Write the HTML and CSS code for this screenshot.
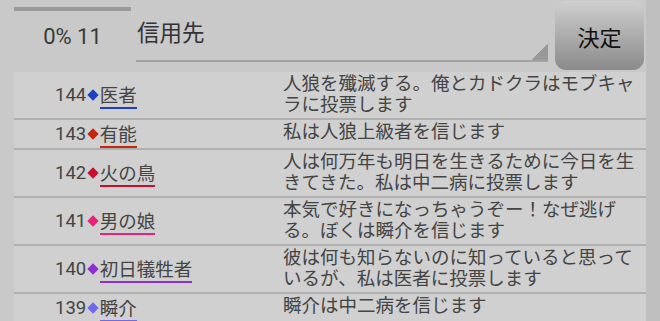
FILE: index.html
```html
<!DOCTYPE html>
<html lang="ja">
<head>
    <meta charset="UTF-8">
    <title>投票</title>
    <link rel="stylesheet" href="styles.css">
</head>
<body>
    <div class="top">
        <div class="progress">
            <div class="bar"></div>
            <div class="count">0% 11</div>
        </div>
        <div class="target">
            <span class="label">信用先</span>
            <span class="corner"></span>
        </div>
        <button class="decide">決定</button>
    </div>

    <div class="log">
        <div class="row first">
            <div class="who"><span class="num">144</span><span class="mark c144"></span><span class="name c144">医者</span></div>
            <div class="msg">人狼を殲滅する。俺とカドクラはモブキャラに投票します</div>
        </div>
        <div class="row">
            <div class="who"><span class="num">143</span><span class="mark c143"></span><span class="name c143">有能</span></div>
            <div class="msg">私は人狼上級者を信じます</div>
        </div>
        <div class="row">
            <div class="who"><span class="num">142</span><span class="mark c142"></span><span class="name c142">火の鳥</span></div>
            <div class="msg">人は何万年も明日を生きるために今日を生きてきた。私は中二病に投票します</div>
        </div>
        <div class="row">
            <div class="who"><span class="num">141</span><span class="mark c141"></span><span class="name c141">男の娘</span></div>
            <div class="msg">本気で好きになっちゃうぞー！なぜ逃げる。ぼくは瞬介を信じます</div>
        </div>
        <div class="row">
            <div class="who"><span class="num">140</span><span class="mark c140"></span><span class="name c140">初日犠牲者</span></div>
            <div class="msg">彼は何も知らないのに知っていると思っているが、私は医者に投票します</div>
        </div>
        <div class="row">
            <div class="who"><span class="num">139</span><span class="mark c139"></span><span class="name c139">瞬介</span></div>
            <div class="msg">瞬介は中二病を信じます</div>
        </div>
    </div>
</body>
</html>
```

FILE: styles.css
```css
html, body {
    height: 321px;
    overflow: hidden;
}
body {
    margin: 0;
    padding: 0 14px;
    background: linear-gradient(to right, #c9c9c9 calc(100% - 14px), #bfbfbf calc(100% - 14px));
    font-family: Roboto, "Noto Sans CJK JP", sans-serif;
    color: #444;
}
.top {
    display: flex;
    height: 73px;
}
.progress {
    width: 117px;
    padding-top: 7px;
}
.bar {
    height: 4px;
    background-color: #9a9a9a;
}
.count {
    text-align: center;
    font-size: 22px;
    line-height: 26px;
    margin-top: 13px;
    color: #3a3a3a;
}
.target {
    position: relative;
    margin-left: 5px;
    width: 412px;
    height: 60px;
    border-bottom: 2px solid #a3a3a3;
}
.label {
    display: block;
    padding-left: 1px;
    margin-top: 18px;
    font-size: 22.5px;
    line-height: 30px;
    color: #333;
}
.corner {
    position: absolute;
    right: 0;
    bottom: 0;
    width: 16px;
    height: 16px;
    background: linear-gradient(to bottom right, transparent 50%, #999 50%);
}
.decide {
    margin: 1px 0 0 7px;
    width: 89px;
    height: 69px;
    border: none;
    border-radius: 11px;
    background: linear-gradient(#cfcfcf, #8a8a8a);
    font-family: "Noto Sans CJK JP", sans-serif;
    font-size: 22px;
    color: #111;
    padding: 0;
}
.log {
    background-color: #d0d0d0;
}
.row {
    display: flex;
    border-bottom: 2px solid #b0b0b0;
}
.row.first {
    margin-top: -1px;
}
.who {
    width: 228px;
    padding-left: 41px;
    display: flex;
    align-items: center;
    font-size: 18.5px;
    line-height: 21px;
}
.num {
    color: #444;
}
.mark {
    width: 8px;
    height: 8px;
    margin: 0 2.5px 0 3px;
    transform: rotate(45deg);
}
.name {
    border-bottom: 2px solid;
    line-height: 22px;
    margin-top: 4px;
    color: #444;
}
.msg {
    flex: 1;
    font-size: 18.5px;
    line-height: 21px;
    padding: 2px 0;
}
.mark.c144 { background-color: #1e3fc0; }
.name.c144 { border-color: #1e3fc0; }
.mark.c143 { background-color: #c4280c; }
.name.c143 { border-color: #c4280c; }
.mark.c142 { background-color: #c8102e; }
.name.c142 { border-color: #c8102e; }
.mark.c141 { background-color: #e8247a; }
.name.c141 { border-color: #e8247a; }
.mark.c140 { background-color: #8e2fd6; }
.name.c140 { border-color: #8e2fd6; }
.mark.c139 { background-color: #7068f0; }
.name.c139 { border-color: #7068f0; }
```
